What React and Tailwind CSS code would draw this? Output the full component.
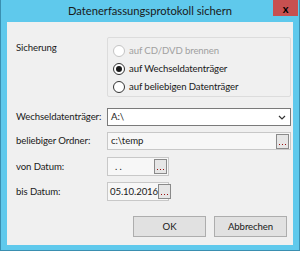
import React from 'react'

const font = { fontFamily: 'Lato, "Noto Sans", sans-serif' }

const Radio = ({ label, checked, disabled }) => (
    <div className="flex items-center h-[18px]">
        <span
            className={`w-[12px] h-[12px] rounded-full border bg-white flex items-center justify-center ${
                disabled ? 'border-[#c4c4c4]' : 'border-[#333333]'
            }`}
        >
            {checked && <span className="w-[6px] h-[6px] rounded-full bg-[#1a1a1a]" />}
        </span>
        <span className={`ml-[4px] ${disabled ? 'text-[#a0a0a0]' : 'text-[#1a1a1a]'}`}>{label}</span>
    </div>
)

const DotsButton = () => (
    <div className="w-[13px] h-[15px] shrink-0 border border-[#8a8a8a] bg-[#e6e6e6] flex items-end justify-center pb-[3px]">
        <svg width="7" height="1" viewBox="0 0 7 1">
            <rect x="0" y="0" width="1" height="1" fill="#9a1010" />
            <rect x="3" y="0" width="1" height="1" fill="#9a1010" />
            <rect x="6" y="0" width="1" height="1" fill="#9a1010" />
        </svg>
    </div>
)

const Row = ({ label, children, className = '' }) => (
    <div className={`flex items-center ${className}`}>
        <div className="w-[100px] pl-[9px] text-[#1a1a1a] whitespace-nowrap">{label}</div>
        {children}
    </div>
)

const App = () => {
    return (
        <div className="w-[304px] h-[253px] bg-white overflow-hidden text-[9.6px] tracking-[-0.1px] leading-none" style={font}>
            <div className="w-[300px] h-[251px] bg-[#5fc9ec] border border-[#3a8fb0] border-t-0 flex flex-col">
                <div className="h-[22px] flex items-start relative">
                    <div className="flex-1 text-center pt-[5px] text-[11.2px] tracking-normal text-[#1a1a1a]">
                        Datenerfassungsprotokoll sichern
                    </div>
                    <div className="absolute right-[1px] top-0 w-[25px] h-[16px] bg-[#c75050] flex items-center justify-center">
                        <span className="text-[11px] font-bold text-black leading-none">x</span>
                    </div>
                </div>
                <div className="mx-[6px] mb-[5px] flex-1 bg-[#f0f0f0] flex flex-col pt-[15px]">
                    <div className="flex">
                        <div className="w-[100px] pl-[9px] pt-[6px] text-[#1a1a1a]">Sicherung</div>
                        <div className="w-[184px] h-[60px] border border-[#dcdcdc] rounded-[2px] pl-[5px] pt-[4px]">
                            <Radio label="auf CD/DVD brennen" disabled />
                            <Radio label="auf Wechseldatenträger" checked />
                            <Radio label="auf beliebigen Datenträger" />
                        </div>
                    </div>

                    <Row label="Wechseldatenträger:" className="mt-[11px]">
                        <div className="w-[184px] h-[18px] bg-white border border-[#7a7a7a] flex items-center pl-[3px] pr-[4px]">
                            <span className="flex-1 text-[#1a1a1a]">A:\</span>
                            <svg width="8" height="5" viewBox="0 0 8 5">
                                <path d="M1 1 L4 4 L7 1" fill="none" stroke="#333" strokeWidth="1.2" />
                            </svg>
                        </div>
                    </Row>

                    <Row label="beliebiger Ordner:" className="mt-[6px]">
                        <div className="w-[184px] h-[18px] bg-[#f7f7f7] border border-[#c8c8c8] flex items-center pl-[3px] pr-[1px]">
                            <span className="flex-1 text-[#1a1a1a]">c:\temp</span>
                            <DotsButton />
                        </div>
                    </Row>

                    <Row label="von Datum:" className="mt-[7px]">
                        <div className="w-[62px] h-[19px] bg-[#f7f7f7] border border-[#c8c8c8] flex items-center pl-[3px] pr-[1px]">
                            <span className="flex-1 text-[#1a1a1a] pl-[4px]">. .</span>
                            <DotsButton />
                        </div>
                    </Row>

                    <Row label="bis Datum:" className="mt-[6px]">
                        <div className="w-[62px] h-[19px] bg-[#f7f7f7] border border-[#c8c8c8] flex items-center pl-[2px] pr-[1px]">
                            <span className="flex-1 text-[#1a1a1a] whitespace-nowrap">05.10.2016</span>
                            <DotsButton />
                        </div>
                    </Row>

                    <div className="flex justify-end gap-[8px] mt-[15px] pr-[6px]">
                        <button className="w-[73px] h-[21px] bg-[#e1e1e1] border border-[#adadad] text-[#1a1a1a]">OK</button>
                        <button className="w-[73px] h-[21px] bg-[#e1e1e1] border border-[#adadad] text-[#1a1a1a]">Abbrechen</button>
                    </div>
                </div>
            </div>
        </div>
    )
}

export default App
